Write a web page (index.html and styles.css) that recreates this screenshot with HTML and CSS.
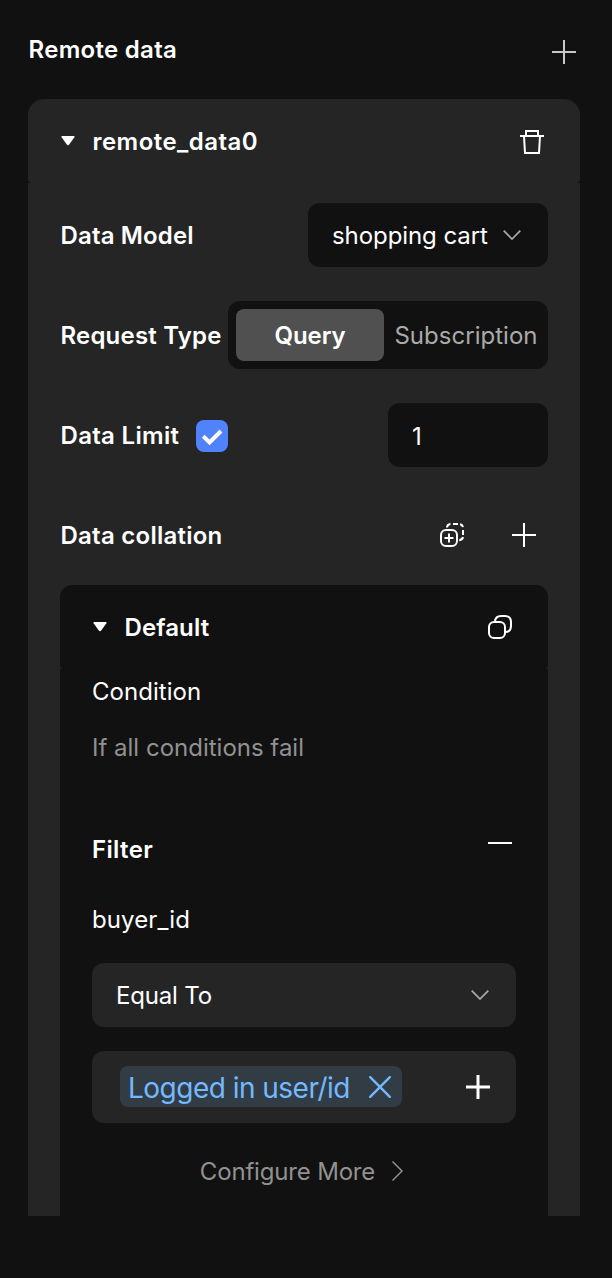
FILE: index.html
```html
<!DOCTYPE html>
<html lang="en">
<head>
<meta charset="utf-8">
<title>Remote data</title>
<link rel="stylesheet" href="styles.css">
</head>
<body>
<main class="panel">
  <header class="panel-head">
    <h1 class="title t-remote">Remote data</h1>
    <svg class="icon add-muted" width="24" height="24" viewBox="0 0 24 24"><path d="M12 0v24M0 12h24" stroke="#c8c8c8" stroke-width="2"/></svg>
  </header>
  <section class="card">
    <div class="card-head">
      <svg class="caret" width="14" height="10" viewBox="0 0 14 10"><path d="M1.2 0h11.6q1.4 0 .6 1.2L8.2 8.6q-1.200 1.400-2.400 0L.6 1.200Q-.2 0 1.200 0z" fill="#fff"/></svg>
      <h2 class="title t-name">remote_data0</h2>
      <svg class="icon" width="24" height="24" viewBox="0 0 24 24" fill="none" stroke="#fff" stroke-width="2"><path d="M0 6h24M6 6V1h12v5M4 6l1 17h14l1-17"/></svg>
    </div>
    <div class="card-body">
      <div class="row">
        <span class="title t-model">Data Model</span>
        <div class="select model-select"><span class="text t-cart">shopping cart</span><svg width="18" height="10" viewBox="0 0 18 10"><path d="M.7.7L9 9 17.300.7" fill="none" stroke="#aaa" stroke-width="1.700"/></svg></div>
      </div>
      <div class="row">
        <span class="title t-request">Request Type</span>
        <div class="segmented">
          <span class="segment active title t-query">Query</span>
          <span class="segment text t-subscription">Subscription</span>
        </div>
      </div>
      <div class="row">
        <span class="title t-limit">Data Limit</span>
        <span class="checkbox"><svg width="32" height="32" viewBox="0 0 32 32"><path d="M7.300 16.300l6.300 6.200L25 11" fill="none" stroke="#fff" stroke-width="4"/></svg></span>
        <div class="number text">1</div>
      </div>
      <div class="row">
        <span class="title t-collation">Data collation</span>
        <div class="actions">
          <svg width="24" height="24" viewBox="0 0 24 24" fill="none" stroke="#fff" stroke-width="2"><rect x="1" y="7" width="16" height="16" rx="5"/><path d="M9 10.500v9M4.500 15h9"/><path d="M7 4.500Q7.200 1.300 10.500 1M13 1h5M20 1.200q2.600.5 2.900 3M23 7v5M23 14q-.4 2.800-3.800 3.200"/></svg>
          <svg width="24" height="24" viewBox="0 0 24 24"><path d="M12 0v24M0 12h24" stroke="#fff" stroke-width="2"/></svg>
        </div>
      </div>
      <section class="rule">
        <div class="rule-head">
          <svg class="caret" width="14" height="10" viewBox="0 0 14 10"><path d="M1.2 0h11.6q1.4 0 .6 1.2L8.2 8.6q-1.200 1.400-2.400 0L.6 1.200Q-.2 0 1.200 0z" fill="#fff"/></svg>
          <h3 class="title t-default">Default</h3>
          <svg class="icon copy" width="24" height="24" viewBox="0 0 24 24" fill="none" stroke="#fff" stroke-width="2"><rect x="1" y="7" width="16" height="16" rx="5"/><path d="M7 7v-.5Q7.500 1 13 1h4q6 0 6 6v4q0 6-6 6"/></svg>
        </div>
        <div class="rule-body">
          <p class="text line t-condition">Condition</p>
          <p class="text line muted t-fail">If all conditions fail</p>
          <div class="filter-head"><h3 class="title t-filter">Filter</h3><svg class="icon minus" width="24" height="2" viewBox="0 0 24 2"><path d="M0 1h24" stroke="#fff" stroke-width="2"/></svg></div>
          <p class="text line t-buyer">buyer_id</p>
          <div class="select operator"><span class="text t-equal">Equal To</span><svg width="18" height="10" viewBox="0 0 18 10"><path d="M.7.7L9 9 17.300.7" fill="none" stroke="#aaa" stroke-width="1.700"/></svg></div>
          <div class="value">
            <span class="tag"><span class="t-tag">Logged in user/id</span><svg width="22" height="22" viewBox="0 0 22 22"><path d="M1.200 1.200l19.600 19.600M20.800 1.200L1.200 20.800" stroke="#73b9ff" stroke-width="2.400" stroke-linecap="round"/></svg></span>
            <svg width="24" height="24" viewBox="0 0 24 24"><path d="M12 0v24M0 12h24" stroke="#fff" stroke-width="3"/></svg>
          </div>
          <div class="more"><span class="text t-more">Configure More</span><svg class="more-arrow" width="11" height="20" viewBox="0 0 11 20"><path d="M.5.500L10 10 .5 19.500" fill="none" stroke="#999" stroke-width="1.400"/></svg></div>
        </div>
      </section>
    </div>
  </section>
</main>
</body>
</html>
```
FILE: styles.css
```css
* { box-sizing: border-box; }
body { margin: 0; background: #111; color: #fff; font-family: Inter, "Liberation Sans", sans-serif; }
h1, h2, h3, p { margin: 0; }
svg { display: block; flex: none; }
.panel { width: 612px; height: 1278px; padding: 0 32px 0 28px; overflow: hidden; }
.panel-head { height: 99px; display: flex; align-items: center; justify-content: space-between; }
.title, .text { font-size: 24px; line-height: 32px; letter-spacing: 0; white-space: nowrap; }
.title { font-weight: 600; letter-spacing: 0.2px; }
.text { font-weight: 400; }
.icon { margin-left: auto; }
.add-muted { margin: 5px 4px 0 auto; }
.card { height: 1117px; display: flex; flex-direction: column; }
.card-head { height: 84px; flex: none; display: flex; align-items: center; padding: 2px 36px 0 33px; background: #252525; border-radius: 16px 16px 4px 4px; }
.caret { margin: -3px 17px 0 0; }
.card-body { flex: 1; display: flex; flex-direction: column; padding: 2px 32px 0; background: #252525; }
.row { height: 100px; flex: none; display: flex; align-items: center; justify-content: space-between; }
.row > .title { padding: 2px 0 0 0.5px; }
.select { height: 64px; display: flex; align-items: center; justify-content: space-between; border-radius: 12px; }
.model-select { width: 240px; padding: 0 27px 0 24px; background: #111; }
.segmented { width: 320px; height: 68px; padding: 8px; display: flex; flex: none; background: #111; border-radius: 12px; }
.segment { flex: none; width: 148px; height: 52px; display: flex; align-items: center; justify-content: center; padding-top: 2px; color: #aaa; border-radius: 8px; }
.segment + .segment { padding-left: 16px; }
.active { color: #fff; background: #505050; }
.checkbox { width: 32px; height: 32px; margin: 2px auto 0 0; background: #5082fb; border-radius: 8px; }
.number { width: 160px; height: 64px; display: flex; align-items: center; padding: 3px 24px 0; background: #111; border-radius: 12px; }
.actions { display: flex; gap: 48px; padding-right: 12px; }
.rule { flex: 1; display: flex; flex-direction: column; }
.rule-head { height: 84px; flex: none; display: flex; align-items: center; padding: 1px 36px 0 33px; background: #111; border-radius: 12px 12px 4px 4px; }
.rule-head .caret { margin-top: -1px; }
.copy { margin-top: -1px; }
.rule-body { flex: 1; display: flex; flex-direction: column; padding: 7px 32px 0; background: #111; }
.line { height: 32px; margin-bottom: 24px; }
.muted { color: #919191; }
.filter-head { display: flex; align-items: center; height: 32px; margin: 46px 0 38px; }
.minus { margin: 0 4px 15px auto; }
.operator { background: #252525; padding: 0 27px 0 24px; margin-bottom: 24px; flex: none; }
.value { height: 72px; flex: none; display: flex; align-items: center; justify-content: space-between; padding: 0 26px 0 28px; background: #252525; border-radius: 12px; }
.tag { width: 282px; height: 41px; display: flex; align-items: center; justify-content: space-between; padding: 1px 11px 0 8px; margin-top: -1px; background: #323c45; border-radius: 8px; color: #73b9ff; font-size: 28px; white-space: nowrap; }
.more { display: flex; align-items: center; justify-content: center; gap: 17px; height: 32px; margin-top: 33px; padding-right: 5px; color: #919191; }
.more-arrow { margin-top: -2px; }

.t-remote { padding-left: 0.5px; letter-spacing: 0.3px; }
.t-name { padding-left: 0.5px; letter-spacing: 0.45px; }
.t-model { letter-spacing: 0.15px; }
.t-cart { padding-top: 2px; letter-spacing: -0.08px; }
.t-query { letter-spacing: -0.05px; padding-left: 0; }
.t-subscription { letter-spacing: 0.03px; }
.t-limit { width: 136px; letter-spacing: 0.3px; }
.t-collation { letter-spacing: 0.25px; }
.t-default { padding-left: 0.5px; letter-spacing: 0.1px; }
.t-condition { letter-spacing: 0.05px; }
.t-filter { letter-spacing: 0.35px; }
.t-buyer { margin-bottom: 27px; letter-spacing: 0.1px; }
.t-equal { padding-top: 2px; letter-spacing: -0.18px; }
.t-tag { padding-top: 1px; letter-spacing: -0.52px; }
.t-more { letter-spacing: -0.18px; }
```
